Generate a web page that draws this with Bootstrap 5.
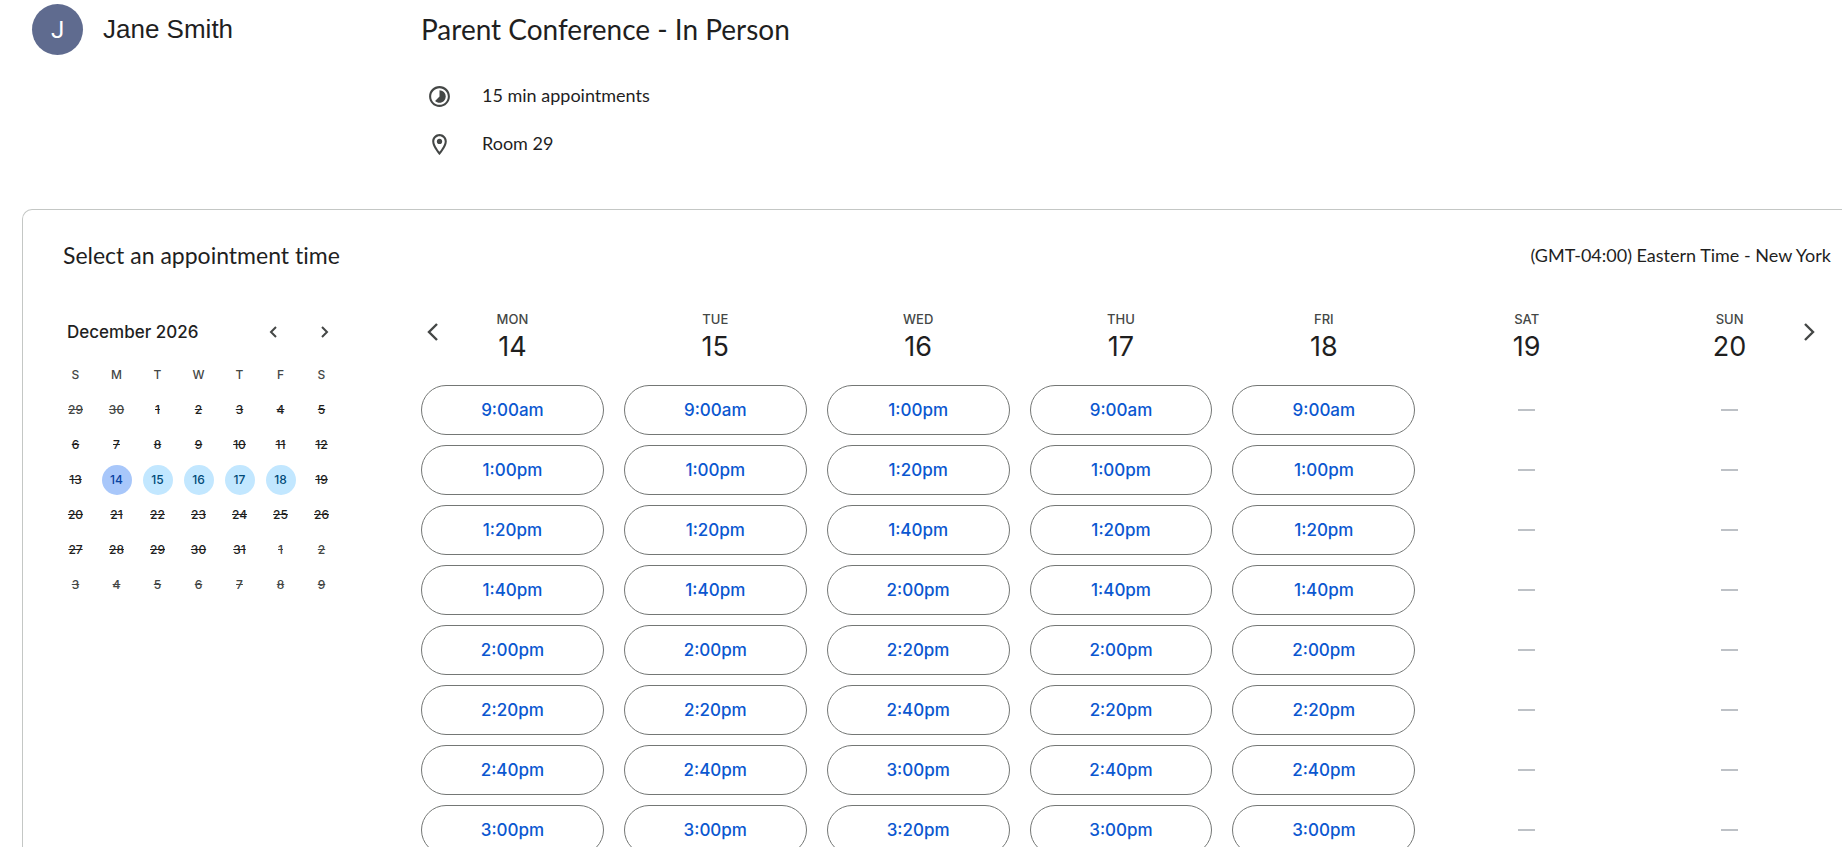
<!DOCTYPE html>
<html lang="en">
<head>
<meta charset="utf-8">
<meta name="viewport" content="width=device-width, initial-scale=1">
<title>Parent Conference - In Person</title>
<link href="https://cdn.jsdelivr.net/npm/bootstrap@5.3.0/dist/css/bootstrap.min.css" rel="stylesheet">
<style>
  :root { --side: 421px; --muted: #444746; }
  body { font-family: Lato, "Liberation Sans", sans-serif; font-size: 18px; line-height: 24px; color: #1f1f1f; background: #fff; font-variant-ligatures: none; }
  .medium { font-family: Inter, "Liberation Sans", sans-serif; font-weight: 500; }
  .side { width: var(--side); flex: none; }
  .host { height: 59px; padding-left: 32px; gap: 20px; font: 26px/32px "Liberation Sans", Arial, sans-serif; }
  .host-name { padding-bottom: 2px; }
  .avatar { width: 51px; height: 51px; background: #5f6b8f; font: 24px/28px Roboto, sans-serif; }
  .title { height: 57px; font-size: 28px; line-height: 36px; }
  .facts { padding-top: 15px; padding-left: 6px; }
  .facts li { height: 48px; gap: 30px; }
  .facts span { padding-bottom: 2px; }
  .facts svg, .arrow { color: var(--muted); }
  .booking { margin: 41px 0 0 22px; border: 1px solid #c4c7c5; border-width: 1px 0 0 1px; border-top-left-radius: 10px; }
  .booking-head { height: 90px; padding: 0 11px 0 40px; }
  .booking-head h2 { font-size: 23px; line-height: 28px; }
  .picker { width: 398px; flex: none; padding: 7px 0 0 32px; }
  .month { width: 290px; height: 50px; padding-left: 12px; }
  .month h3 { font-size: 17px; line-height: 24px; }
  .arrow { border: 0; background: none; padding: 0; display: grid; place-items: center; width: 40px; height: 40px; }
  .month .arrow + .arrow { margin-left: 12px; }
  .dates { width: 287px; table-layout: fixed; font-size: 12px; line-height: 16px; text-align: center; }
  .dates th, .dates td { height: 35px; padding: 0; vertical-align: middle; }
  .dates th { color: var(--muted); font-weight: 500; }
  .dates button { border: 0; border-radius: 50%; width: 30px; height: 30px; padding: 0; background: none; color: inherit; font: inherit; }
  .dates button:disabled { text-decoration: line-through; }
  .dates .outside { color: var(--muted); }
  .dates .open { background: #c2e7ff; color: #004a77; }
  .dates .chosen { background: #a8c7fa; color: #0842a0; }
  .week { padding-right: 21px; }
  .week-grid { display: grid; grid-template-columns: repeat(7, minmax(0, 1fr)); gap: 20px; }
  .day-head { height: 85px; padding-top: 11px; text-align: center; }
  .day-name { font-size: 13px; line-height: 16px; color: var(--muted); }
  .day-number { font-family: Inter, "Liberation Sans", sans-serif; font-size: 27px; line-height: 40px; }
  .week > .arrow { position: absolute; top: 12px; left: -8px; }
  .week > .arrow.next { left: auto; right: 13px; }
  .slots { gap: 10px; }
  .slot { height: 50px; border: 1px solid #747775; color: #0b57d0; background: #fff; font-size: 17px; line-height: 24px; padding: 0; }
  .slot:hover { background: #f0f4fc; }
  .none { height: 50px; display: grid; place-items: center; }
  .none::before { content: ""; width: 17px; height: 2px; background: #bdc1c6; }
</style>
</head>
<body class="vh-100 overflow-hidden">
<header class="d-flex">
  <div class="side">
    <div class="host d-flex align-items-center">
      <span class="avatar rounded-circle text-white d-flex align-items-center justify-content-center">J</span>
      <span class="host-name">Jane Smith</span>
    </div>
  </div>
  <div class="flex-grow-1">
    <h1 class="title fw-normal mb-0 d-flex align-items-center">Parent Conference - In Person</h1>
    <ul class="facts list-unstyled mb-0">
      <li class="d-flex align-items-center">
        <svg width="25" height="25" viewBox="0 0 24 24" fill="currentColor" aria-hidden="true"><path d="M16.24 7.76A5.97 5.97 0 0 0 12 6v6l-4.24 4.24c2.34 2.34 6.14 2.34 8.49 0a5.99 5.99 0 0 0-.01-8.48zM12 2C6.48 2 2 6.48 2 12s4.48 10 10 10 10-4.48 10-10S17.52 2 12 2zm0 18c-4.42 0-8-3.58-8-8s3.58-8 8-8 8 3.58 8 8-3.58 8-8 8z"/></svg>
        <span>15 min appointments</span>
      </li>
      <li class="d-flex align-items-center">
        <svg width="25" height="25" viewBox="0 0 24 24" fill="currentColor" aria-hidden="true"><path d="M12 2C8.13 2 5 5.13 5 9c0 5.25 7 13 7 13s7-7.75 7-13c0-3.87-3.13-7-7-7zM7 9c0-2.76 2.24-5 5-5s5 2.24 5 5c0 2.88-2.88 7.19-5 9.88C9.92 16.21 7 11.85 7 9z"/><circle cx="12" cy="9" r="2.5"/></svg>
        <span>Room 29</span>
      </li>
    </ul>
  </div>
</header>

<main class="booking">
  <div class="booking-head d-flex align-items-center justify-content-between">
    <h2 class="fw-normal mb-0">Select an appointment time</h2>
    <span>(GMT-04:00) Eastern Time - New York</span>
  </div>
  <div class="d-flex">
    <section class="picker medium" aria-label="Month">
      <div class="month d-flex align-items-center">
        <h3 class="medium mb-0 me-auto">December 2026</h3>
        <button class="arrow" type="button" aria-label="Previous month"><svg width="8" height="12" viewBox="0 0 8 12" fill="none" stroke="currentColor" stroke-width="2"><path d="M7 1 2 6l5 5"/></svg></button>
        <button class="arrow" type="button" aria-label="Next month"><svg width="8" height="12" viewBox="0 0 8 12" fill="none" stroke="currentColor" stroke-width="2"><path d="m1 1 5 5-5 5"/></svg></button>
      </div>
      <table class="dates">
        <thead><tr><th scope="col">S</th><th scope="col">M</th><th scope="col">T</th><th scope="col">W</th><th scope="col">T</th><th scope="col">F</th><th scope="col">S</th></tr></thead>
        <tbody id="dates"></tbody>
      </table>
    </section>
    <section class="week flex-grow-1 position-relative" aria-label="Available times">
      <button class="arrow" type="button" aria-label="Previous week"><svg width="12" height="18" viewBox="0 0 12 18" fill="none" stroke="currentColor" stroke-width="2.4"><path d="M10 1 2 9l8 8"/></svg></button>
      <button class="arrow next" type="button" aria-label="Next week"><svg width="12" height="18" viewBox="0 0 12 18" fill="none" stroke="currentColor" stroke-width="2.4"><path d="m2 1 8 8-8 8"/></svg></button>
      <div class="week-grid" id="week"></div>
    </section>
  </div>
</main>

<script>
  // Month grid: starts on Sunday 29 November, six weeks long.
  const first = new Date(2026, 10, 29);
  let rows = '';
  for (let w = 0; w < 6; w++) {
    rows += '<tr>';
    for (let d = 0; d < 7; d++) {
      const day = new Date(first.getFullYear(), first.getMonth(), first.getDate() + w * 7 + d);
      const n = day.getDate();
      const inMonth = day.getMonth() === 11;
      const open = inMonth && n >= 14 && n <= 18;
      const cls = !inMonth ? 'outside' : n === 14 ? 'chosen' : open ? 'open' : '';
      rows += `<td><button type="button" class="${cls}"${open ? '' : ' disabled'}>${n}</button></td>`;
    }
    rows += '</tr>';
  }
  document.getElementById('dates').innerHTML = rows;

  // Free slots of each day; a day with none shows a dash in every row.
  const usual = ['9:00am', '1:00pm', '1:20pm', '1:40pm', '2:00pm', '2:20pm', '2:40pm', '3:00pm'];
  const days = [
    ['MON', 14, usual], ['TUE', 15, usual],
    ['WED', 16, [...usual.slice(1), '3:20pm']],
    ['THU', 17, usual], ['FRI', 18, usual], ['SAT', 19, []], ['SUN', 20, []]
  ];
  document.getElementById('week').innerHTML = days.map(([name, number, times]) => `
    <div>
      <div class="day-head"><div class="day-name medium">${name}</div><div class="day-number">${number}</div></div>
      <div class="slots d-flex flex-column">${usual.map((_, i) => times[i]
        ? `<button type="button" class="btn slot rounded-pill medium">${times[i]}</button>`
        : '<div class="none"></div>').join('')}</div>
    </div>`).join('');
</script>
<script src="https://cdn.jsdelivr.net/npm/bootstrap@5.3.0/dist/js/bootstrap.bundle.min.js"></script>
</body>
</html>
